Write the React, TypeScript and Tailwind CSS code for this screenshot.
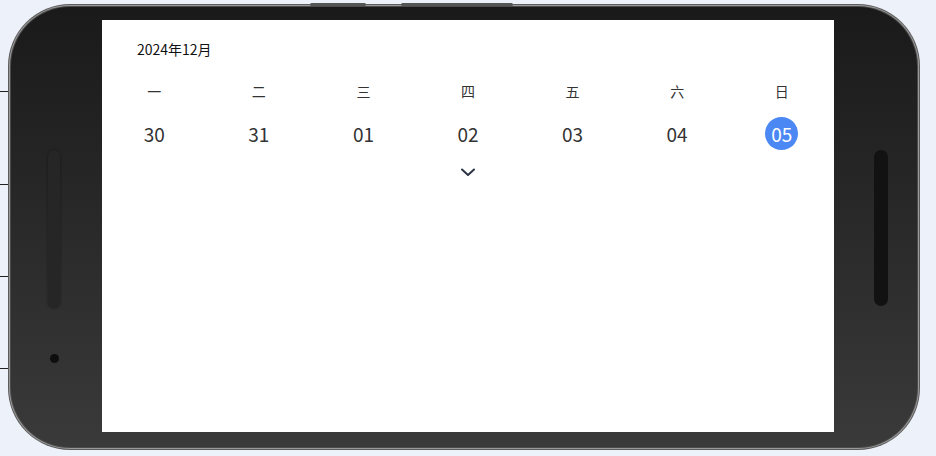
import React from "react";

const weekdays = ["一", "二", "三", "四", "五", "六", "日"];
const dates = ["30", "31", "01", "02", "03", "04", "05"];

export default function App() {
  return (
    <div
      className="relative w-[936px] h-[456px] overflow-hidden bg-[#edf1f9] pl-[8px] pt-[4px]"
      style={{ fontFamily: '"Noto Sans CJK SC", "Noto Sans", sans-serif' }}
    >
      {/* background lines on the left */}
      <div className="absolute left-0 top-[91px] w-[10px] h-px bg-[#222]" />
      <div className="absolute left-0 top-[184px] w-[10px] h-px bg-[#222]" />
      <div className="absolute left-0 top-[276px] w-[10px] h-px bg-[#222]" />
      <div className="absolute left-0 top-[368px] w-[10px] h-px bg-[#222]" />

      {/* phone */}
      <div className="relative w-[912px] h-[446px] rounded-[62px] bg-[#5c5c5c] p-[1px]">
        <div className="w-full h-full rounded-[61px] bg-[#9a9a9a] p-[1px]">
          <div className="w-full h-full rounded-[60px] bg-[#4a4a4a] p-[1px]">
            <div className="flex w-full h-full rounded-[59px] bg-gradient-to-b from-[#1a1a1a] to-[#3a3a3a] overflow-hidden">
              {/* left bezel */}
              <div className="w-[91px] flex flex-col items-center pt-[143px] pr-[5px]">
                <div className="w-[12px] h-[158px] rounded-full bg-[#262626] shadow-[0_0_3px_rgba(0,0,0,0.4)]" />
                <div className="mt-[46px] w-[9px] h-[9px] rounded-full bg-[#0e0e0e]" />
              </div>
              {/* screen */}
              <div className="mt-[13px] mb-[15px] w-[732px] bg-white flex flex-col">
                <div className="pl-[35px] pt-[20px] text-[14px] leading-[18px] text-[#111]">
                  2024年12月
                </div>
                <div className="grid grid-cols-7 mt-[22px] h-[22px] items-center">
                  {weekdays.map((d) => (
                    <div key={d} className="text-center text-[14px] leading-[22px] text-[#333]">
                      {d}
                    </div>
                  ))}
                </div>
                <div className="grid grid-cols-7 mt-[15px] h-[32px] items-center">
                  {dates.map((d, i) => (
                    <div key={d} className="flex justify-center">
                      {i === 6 ? (
                        <div className="w-[33px] h-[33px] rounded-full bg-[#4b88f4] text-white text-[19px] leading-[33px] text-center">
                          {d}
                        </div>
                      ) : (
                        <div className="text-[19px] leading-[32px] text-[#333]">{d}</div>
                      )}
                    </div>
                  ))}
                </div>
                <div className="grid grid-cols-7 mt-[17px]">
                  <div />
                  <div />
                  <div />
                  <div className="flex justify-center">
                    <svg width="16" height="12" viewBox="0 0 16 12" fill="none">
                      <path d="M2 3.5 L8 9 L14 3.5" stroke="#2b3344" strokeWidth="2" strokeLinecap="round" strokeLinejoin="round" />
                    </svg>
                  </div>
                </div>
              </div>
              {/* right bezel */}
              <div className="flex-1 flex justify-center pt-[143px] pl-[10px]">
                <div className="w-[14px] h-[156px] rounded-full bg-[#121212]" />
              </div>
            </div>
          </div>
        </div>
        {/* top buttons */}
        <div className="absolute top-[-1px] left-[302px] w-[56px] h-[3px] rounded-sm bg-[#555]" />
        <div className="absolute top-[-1px] left-[393px] w-[112px] h-[3px] rounded-sm bg-[#555]" />
      </div>
    </div>
  );
}
